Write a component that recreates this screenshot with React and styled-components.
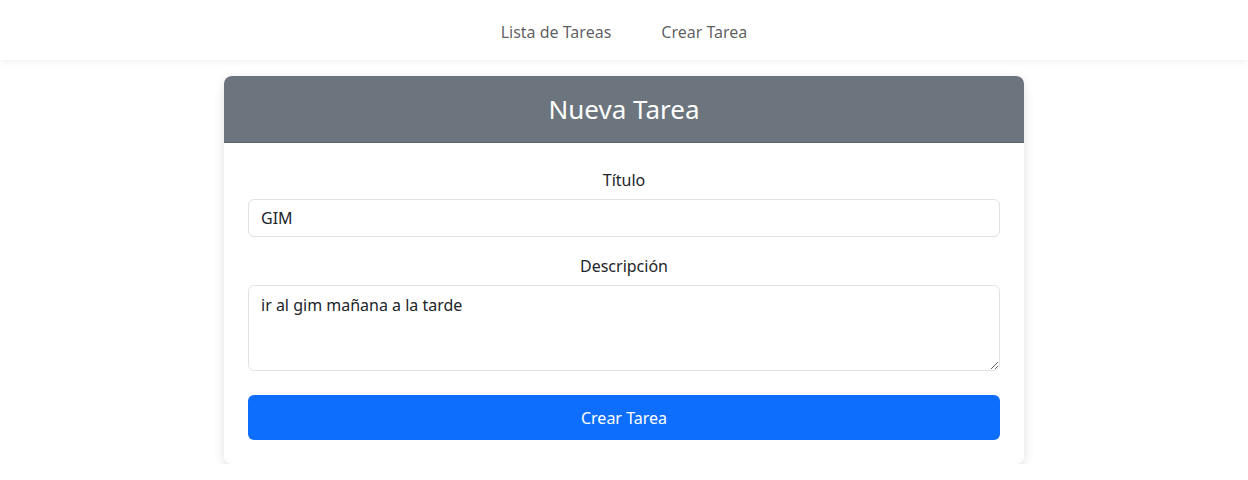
import React from "react";
import styled, { createGlobalStyle } from "styled-components";

const Global = createGlobalStyle`
  html, body { margin: 0; padding: 0; background: #ffffff; }
  body { font-family: "Noto Sans", "Open Sans", sans-serif; color: #212529; }
  * { box-sizing: border-box; }
`;

const Navbar = styled.nav`
  height: 60px;
  background: #fff;
  box-shadow: 0 2px 6px rgba(0,0,0,0.06);
  display: flex;
  justify-content: center;
  align-items: center;
  gap: 50px;
  position: relative;
  z-index: 1;
`;

const NavLink = styled.a`
  font-size: 16px;
  color: rgba(0,0,0,0.65);
  text-decoration: none;
  line-height: 24px;
  margin-top: 4px;
`;

const Main = styled.main`
  display: flex;
  justify-content: center;
  padding-top: 16px;
`;

const Card = styled.div`
  width: 800px;
  background: #fff;
  border-radius: 8px;
  box-shadow: 0 4px 12px rgba(0,0,0,0.12);
  overflow: hidden;
`;

const CardHeader = styled.div`
  height: 67px;
  background: #6c757d;
  border-bottom: 1px solid #5a6169;
  color: #fff;
  display: flex;
  align-items: center;
  justify-content: center;
  font-size: 26px;
  font-weight: 400;
`;

const CardBody = styled.form`
  padding: 24px;
  display: flex;
  flex-direction: column;
`;

const Label = styled.label`
  display: block;
  text-align: center;
  font-size: 16px;
  line-height: 22px;
  padding-top: 2px;
  margin-bottom: 8px;
  margin-top: ${p => p.$first ? "0" : "16px"};
`;

const Input = styled.input`
  width: 100%;
  height: 38px;
  border: 1px solid #dee2e6;
  border-radius: 6px;
  padding: 6px 12px;
  font-size: 16px;
  font-family: inherit;
  color: #212529;
  outline: none;
`;

const TextArea = styled.textarea`
  width: 100%;
  height: 86px;
  border: 1px solid #dee2e6;
  border-radius: 6px;
  padding: 7px 12px 5px;
  font-size: 16px;
  line-height: 24px;
  font-family: inherit;
  color: #212529;
  resize: vertical;
  outline: none;
  display: block;
`;

const Button = styled.button`
  margin-top: 24px;
  height: 45px;
  width: 100%;
  background: #0d6efd;
  border: none;
  border-radius: 6px;
  color: #fff;
  font-size: 16px;
  font-family: inherit;
  padding: 0;
`;

export default function App() {
  return (
    <>
      <Global />
      <Navbar>
        <NavLink href="#">Lista de Tareas</NavLink>
        <NavLink href="#">Crear Tarea</NavLink>
      </Navbar>
      <Main>
        <Card>
          <CardHeader>Nueva Tarea</CardHeader>
          <CardBody onSubmit={e => e.preventDefault()}>
            <Label $first>Título</Label>
            <Input defaultValue="GIM" />
            <Label>Descripción</Label>
            <TextArea defaultValue="ir al gim mañana a la tarde" spellCheck={false} />
            <Button type="submit">Crear Tarea</Button>
          </CardBody>
        </Card>
      </Main>
    </>
  );
}
